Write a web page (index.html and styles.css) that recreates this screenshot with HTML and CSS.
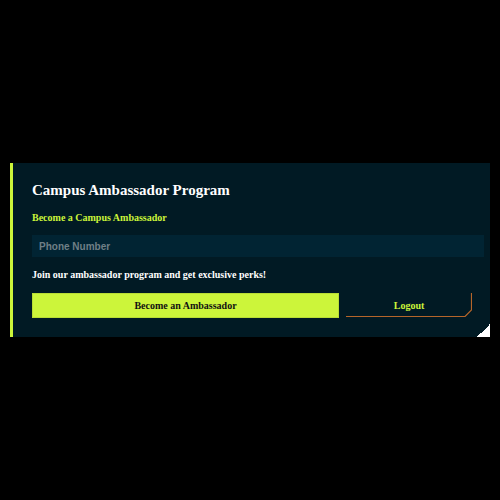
FILE: index.html
```html
<!DOCTYPE html>
<html>
<head>
<meta charset="utf-8">
<link rel="stylesheet" href="styles.css">
</head>
<body>
<div class="card">
  <h1 class="title">Campus Ambassador Program</h1>
  <h2 class="subtitle">Become a Campus Ambassador</h2>
  <input class="phone" type="text" placeholder="Phone Number">
  <p class="perks">Join our ambassador program and get exclusive perks!</p>
  <div class="actions">
    <button class="primary">Become an Ambassador</button>
    <button class="logout">Logout
      <svg class="logout-edge" width="126" height="24" viewBox="0 0 126 24"><polyline points="0,23.5 119,23.5 125.5,17 125.5,0" fill="none" stroke="#b5652a" stroke-width="1.2"/></svg>
    </button>
  </div>
  <span class="corner"></span>
</div>
</body>
</html>
```
FILE: styles.css
```css
html, body {
  margin: 0;
  padding: 0;
  background: #000;
}
body {
  min-height: 500px;
  display: flex;
  align-items: center;
  padding: 0 10px;
  font-family: "Liberation Serif", "Times New Roman", serif;
}
.card {
  position: relative;
  flex: 1;
  background: #011a24;
  border-left: 3px solid #ccf53a;
  padding: 18px 18px 19px 19px;
  box-sizing: border-box;
  height: 174px;
}
.title {
  margin: 0;
  font-size: 15px;
  line-height: 18px;
  color: #fff;
  font-weight: bold;
}
.subtitle {
  margin: 12px 0 0;
  font-size: 10px;
  line-height: 13px;
  color: #ccf53a;
  font-weight: bold;
}
.phone {
  display: block;
  box-sizing: border-box;
  width: calc(100% + 12px);
  height: 22px;
  margin: 11px 0 0;
  padding: 0 7px;
  border: none;
  background: #012433;
  font-family: "Liberation Sans", Arial, sans-serif;
  font-weight: bold;
  font-size: 10px;
  color: #fff;
  outline: none;
}
.phone::placeholder {
  color: #6f7f86;
}
.perks {
  margin: 11px 0 0;
  font-size: 10px;
  line-height: 13px;
  color: #fff;
  font-weight: bold;
}
.actions {
  display: flex;
  gap: 7px;
  margin-top: 12px;
}
.primary {
  flex: 1;
  height: 25px;
  background: #ccf53a;
  border: 1px solid #b9dd35;
  font-family: inherit;
  font-weight: bold;
  font-size: 10px;
  color: #111;
  padding: 0;
}
.logout {
  position: relative;
  width: 126px;
  height: 24px;
  background: transparent;
  border: none;
  font-family: inherit;
  font-weight: bold;
  font-size: 10px;
  color: #ccf53a;
  padding: 0;
}
.logout-edge {
  position: absolute;
  left: 0;
  top: 0;
}
.corner {
  position: absolute;
  right: 0;
  bottom: 0;
  width: 13px;
  height: 13px;
  background: linear-gradient(to top left, #fff 50%, transparent 50%);
}
```
